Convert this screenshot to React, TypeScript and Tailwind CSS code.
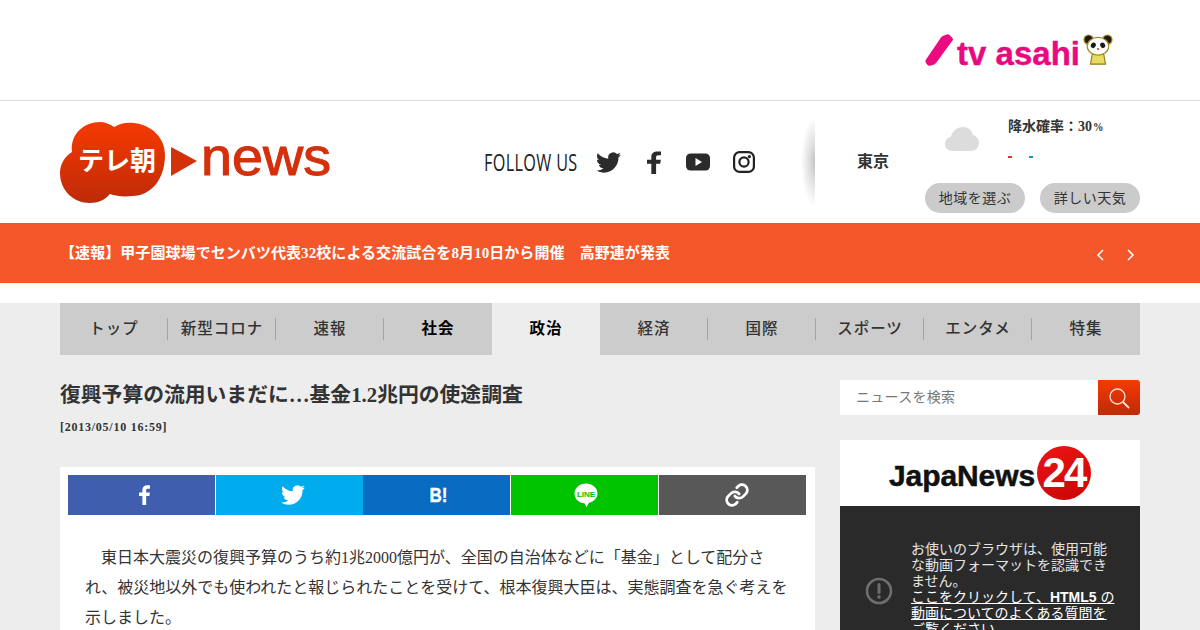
import React from "react";

const serif = { fontFamily: '"Liberation Serif", "Noto Sans CJK JP", serif' };

function TvAsahi() {
  return (
    <div className="flex items-start h-[40px]">
      <svg width="29" height="33" viewBox="0 0 29 33" className="mt-[3px] shrink-0">
        <path d="M1 25.500 L16 3.500 Q17 2 19 1.500 L22 0.500 Q23.500 0 24.500 1 L27.500 4 Q28.500 5 27.500 6.500 L11 29 Q10 30.200 8.500 30.700 L5 31.700 Q3.500 32 2.500 31 L0.700 28.500 Q0 27 1 25.500Z" fill="#ec0a80" />
      </svg>
      <span className="text-[33px] font-bold text-[#e6097f] leading-none ml-[3px] mt-[6px] whitespace-nowrap [-webkit-text-stroke:0.4px_#e6097f] [font-family:'Liberation_Sans',sans-serif]">tv asahi</span>
      <svg width="30" height="32" viewBox="0 0 32 34" className="ml-[3px] mt-[3px] shrink-0">
        <circle cx="6" cy="6" r="5" fill="#1b1b10" stroke="#b59a1e" strokeWidth="1.200" />
        <circle cx="26" cy="6" r="5" fill="#1b1b10" stroke="#b59a1e" strokeWidth="1.200" />
        <path d="M10 21 H22 L24 32 H8Z" fill="#e8dc60" stroke="#8d7a1a" strokeWidth="1.200" />
        <ellipse cx="16" cy="13" rx="11.500" ry="9.500" fill="#fff" stroke="#a18c1a" strokeWidth="1.200" />
        <ellipse cx="11" cy="12" rx="2.600" ry="3" fill="#1a1a1a" transform="rotate(25 11 12)" />
        <ellipse cx="21" cy="12" rx="2.600" ry="3" fill="#1a1a1a" transform="rotate(-25 21 12)" />
        <circle cx="16" cy="16" r="1.100" fill="#c33" />
      </svg>
    </div>
  );
}

function TeleasaLogo() {
  return (
    <svg width="272" height="84" viewBox="0 0 272 84" className="block shrink-0">
      <defs>
        <linearGradient id="cl" x1="0" y1="0" x2="0" y2="1">
          <stop offset="0" stopColor="#f63a02" />
          <stop offset="1" stopColor="#be2a08" />
        </linearGradient>
      </defs>
      <path d="M12 32 C10 14 24 2 40 2 C45 2 50 4 54 7 C60 3 68 2 74 3 C92 5 105 18 105 35 C105 58 92 76 72 76 C64 77 56 76 50 74 C45 80 38 83 30 83 C13 83 0 70 0 53 C0 44 5 36 12 32Z" fill="url(#cl)" />
      <text x="18" y="50" fontSize="26" fontWeight="700" fill="#fff" style={{ fontFamily: '"Noto Sans CJK JP", sans-serif' }} textLength="78" lengthAdjust="spacingAndGlyphs">テレ朝</text>
      <path d="M111 27 L137 41 L111 56Z" fill="#d2310a" />
      <text x="141" y="55" fontSize="51" fontWeight="400" fill="#d4300b" stroke="#d4300b" strokeWidth="1" style={{ fontFamily: '"Liberation Sans", sans-serif' }} textLength="130" lengthAdjust="spacingAndGlyphs">news</text>
    </svg>
  );
}

function Twitter({ size, color }: { size: number; color: string }) {
  return (
    <svg width={size} height={size} viewBox="0 0 24 24" fill={color}>
      <path d="M23.95 4.57a10 10 0 0 1-2.82.77 4.96 4.96 0 0 0 2.16-2.72 9.9 9.9 0 0 1-3.12 1.18 4.92 4.92 0 0 0-8.38 4.48C7.69 8.1 4.07 6.13 1.64 3.16a4.82 4.82 0 0 0-.67 2.48c0 1.71.87 3.21 2.19 4.1a4.9 4.9 0 0 1-2.23-.62v.06a4.92 4.92 0 0 0 3.95 4.83 5 5 0 0 1-2.21.09 4.94 4.94 0 0 0 4.6 3.42A9.87 9.87 0 0 1 0 19.54 14 14 0 0 0 7.56 21.75c9.05 0 14-7.5 14-14 0-.21 0-.42-.02-.63a9.94 9.94 0 0 0 2.41-2.55z" />
    </svg>
  );
}

function Fb({ w, h, color }: { w: number; h: number; color: string }) {
  return (
    <svg width={w} height={h} viewBox="0 0 12 24" fill={color} preserveAspectRatio="none">
      <path d="M7.800 24V13.200h3.500l.6-4.200H7.800V6.400c0-1.200.4-2 2-2H12V.6C11.600.5 10.400.4 9 .4 5.900.4 3.700 2.300 3.700 5.800V9H0v4.200h3.700V24z" />
    </svg>
  );
}

function Follow() {
  return (
    <div className="flex items-center w-[272px] ml-[152px] shrink-0">
      <span className="text-[23px] text-[#222] leading-none w-[112px] shrink-0 whitespace-nowrap scale-x-[0.705] origin-left tracking-[0.5px] [font-family:'Open_Sans',sans-serif]">FOLLOW US</span>
      <div className="w-[25px] h-[22px] flex items-center justify-center"><Twitter size={25} color="#2b2b2b" /></div>
      <div className="ml-[26px]"><Fb w={14} h={23} color="#2b2b2b" /></div>
      <svg width="24" height="18" viewBox="0 0 24 18" className="ml-[25px]">
        <rect width="24" height="17" y="0.500" rx="4.500" fill="#2b2b2b" />
        <path d="M9.500 5 L16 9 L9.500 13Z" fill="#fff" />
      </svg>
      <svg width="22" height="22" viewBox="0 0 22 22" className="ml-[23px]" fill="none" stroke="#222" strokeWidth="2.200">
        <rect x="1.100" y="1.100" width="19.800" height="19.800" rx="5.500" />
        <circle cx="11" cy="11" r="4.600" />
        <circle cx="16.400" cy="5.600" r="0.600" fill="#222" />
      </svg>
    </div>
  );
}

function Weather() {
  return (
    <div className="relative ml-[59px] w-[325px] h-[122px] bg-white shrink-0">
      <div className="absolute left-[-14px] top-[16px] w-[14px] h-[90px] bg-[radial-gradient(ellipse_100%_50%_at_right,#c2c2c2_0%,#dedede_40%,#ffffff_100%)]" />
      <div className="flex h-[82px]">
        <div className="w-[42px]" />
        <div className="w-[60px] text-[16px] font-bold text-[#333] pt-[49px] leading-[24px]" style={serif}>東京</div>
        <div className="w-[91px] pt-[26px] pl-[28px]">
          <svg width="34" height="24" viewBox="0 0 34 24"><path d="M8 24 C2 24 0 20 0 17 C0 13 3 10 6 10 C7 4 12 0 18 0 C23 0 27 3 28 8 C32 9 34 13 34 16 C34 21 30 24 26 24Z" fill="#dcdcdc" /></svg>
        </div>
        <div className="flex-1 pt-[15px]">
          <div className="text-[14px] font-bold text-[#333] leading-[21px] whitespace-nowrap" style={serif}>降水確率：30<span className="ml-[1px] text-[13px] scale-x-[0.8] inline-block origin-left">%</span></div>
          <div className="flex mt-[19px] h-[2px]">
            <span className="w-[4px] h-[1.500px] bg-[#d33]" />
            <span className="w-[4px] h-[1.500px] bg-[#1d8fc9] ml-[17px]" />
          </div>
        </div>
      </div>
      <div className="flex pl-[110px] gap-[15px]">
        <div className="w-[100px] h-[30px] rounded-full bg-[#cbcbcb] flex items-center justify-center text-[14px] text-[#333] tracking-[0.5px]" style={serif}>地域を選ぶ</div>
        <div className="w-[100px] h-[30px] rounded-full bg-[#cbcbcb] flex items-center justify-center text-[14px] text-[#333] tracking-[0.5px]" style={serif}>詳しい天気</div>
      </div>
    </div>
  );
}

const tabs = ["トップ", "新型コロナ", "速報", "社会", "政治", "経済", "国際", "スポーツ", "エンタメ", "特集"];

function Nav() {
  return (
    <div className="mx-[60px] flex h-[52px] bg-[#cccccc]">
      {tabs.map((t, i) => {
        const active = i === 4;
        const strong = i === 3 || i === 4;
        const noDivider = (i >= 3 && i <= 4) || i === 9;
        return (
          <div key={t} className={`relative w-[108px] flex items-center justify-center ${active ? "bg-[#ededed]" : ""}`}>
            <span className={`text-[15.5px] leading-none tracking-[1px] whitespace-nowrap ${strong ? "font-bold text-black" : "font-medium text-[#333]"}`} style={serif}>{t}</span>
            {!noDivider && <span className="absolute right-0 top-[15px] w-[1px] h-[22px] bg-[#a5a5a5]" />}
          </div>
        );
      })}
    </div>
  );
}

function Share() {
  return (
    <div className="flex h-[40px] gap-[1px]">
      <div className="w-[147px] shrink-0 bg-[#3f5fae] flex items-center justify-center pl-[5px]"><Fb w={11} h={20} color="#fff" /></div>
      <div className="w-[147px] shrink-0 bg-[#00acee] flex items-center justify-center pl-[7px]"><Twitter size={24} color="#fff" /></div>
      <div className="w-[147px] shrink-0 bg-[#0a6bc2] -ml-[1px] flex items-center justify-center pl-[4px]">
        <span className="text-white text-[20px] font-bold scale-x-[0.85] [-webkit-text-stroke:0.4px_#fff] [font-family:'Liberation_Sans',sans-serif]">B!</span>
      </div>
      <div className="w-[147px] shrink-0 bg-[#00c300] flex items-center justify-center pl-[2px]">
        <svg width="26" height="26" viewBox="0 0 26 26">
          <path d="M13 1.500 C6.500 1.500 1.500 6 1.500 11.500 C1.500 17 6 21 11.500 21.300 L13.500 25 L16 20.800 C21 19.500 24.500 16 24.500 11.500 C24.500 6 19.500 1.500 13 1.500Z" fill="#fff" />
          <text x="13" y="14.500" textAnchor="middle" fontSize="8" fontWeight="700" fill="#00c300" style={{ fontFamily: '"Liberation Sans", sans-serif' }}>LINE</text>
        </svg>
      </div>
      <div className="w-[147px] shrink-0 bg-[#585858] flex items-center justify-center pl-[9px]">
        <svg width="26" height="26" viewBox="0 0 24 24" fill="none" stroke="#fff" strokeWidth="2.600" strokeLinecap="round" strokeLinejoin="round">
          <path d="M10 13a5 5 0 0 0 7.500.5l3-3a5 5 0 0 0-7-7l-1.700 1.700" />
          <path d="M14 11a5 5 0 0 0-7.500-.5l-3 3a5 5 0 0 0 7 7l1.700-1.700" />
        </svg>
      </div>
    </div>
  );
}

function Article() {
  return (
    <div className="w-[755px] shrink-0">
      <h1 className="text-[20.8px] font-bold text-[#333] leading-[30px] mt-[25px]" style={serif}>復興予算の流用いまだに…基金1.2兆円の使途調査</h1>
      <div className="text-[12px] font-bold text-[#333] leading-[18px] mt-[8px] tracking-[0.75px]" style={serif}>[2013/05/10 16:59]</div>
      <div className="bg-white mt-[31px] pl-[8px] pr-[9px] pt-[8px] h-[300px]">
        <Share />
        <p className="text-[16px] text-[#333] leading-[30px] pl-[17px] pr-[16px] mt-[27px] pt-[1px]" style={serif}>
          <span className="pl-[16px]">東日本大震災の復興予算のうち約1兆2000億円が、全国の自治体などに「基金」として配分さ</span><br />れ、被災地以外でも使われたと報じられたことを受けて、根本復興大臣は、実態調査を急ぐ考えを示しました。
        </p>
      </div>
    </div>
  );
}

function Side() {
  return (
    <div className="w-[300px] ml-[25px] pt-[25px] shrink-0">
      <div className="flex h-[35px]">
        <div className="flex-1 bg-white pl-[16px] flex items-center text-[14px] text-[#777] tracking-[0.3px]" style={serif}>ニュースを検索</div>
        <div className="w-[42px] bg-[linear-gradient(#f63a02,#be2a08)] rounded-r-[3px] flex items-center justify-center">
          <svg width="22" height="22" viewBox="0 0 22 22" fill="none" stroke="#ffe3d2" strokeWidth="1.300"><circle cx="9.500" cy="9.500" r="7.500" /><path d="M15 15l6 6" strokeWidth="1.800" /></svg>
        </div>
      </div>
      <div className="mt-[25px] h-[66px] bg-white flex items-center justify-center">
        <span className="text-[30px] font-bold text-[#111] tracking-[-0.1px] leading-none mt-[5px] [-webkit-text-stroke:0.5px_#111] [font-family:'Liberation_Sans',sans-serif]">JapaNews</span>
        <div className="ml-[2px] w-[54px] h-[54px] rounded-full bg-[linear-gradient(160deg,#ee1414,#c80606)] flex items-center justify-center text-white text-[42px] font-bold tracking-[-2px] leading-none [font-family:'Liberation_Sans',sans-serif]">24</div>
      </div>
      <div className="bg-[#2a2a2a] h-[200px] flex">
        <div className="w-[71px] pl-[25px] pt-[71px]">
          <svg width="28" height="28" viewBox="0 0 28 28" fill="none"><circle cx="14" cy="14" r="12" stroke="#6e6e6e" strokeWidth="2.600" /><path d="M14 7.500v8" stroke="#6e6e6e" strokeWidth="3" strokeLinecap="round" /><circle cx="14" cy="20" r="1.800" fill="#6e6e6e" /></svg>
        </div>
        <div className="w-[206px] pt-[35px] text-[14px] leading-[16px] text-[#e4e4e4] [font-family:'Liberation_Sans','Noto_Sans_CJK_JP',sans-serif]">
          <div>お使いのブラウザは、使用可能な動画フォーマットを認識できません。</div>
          <div className="underline text-white">ここをクリックして、<b>HTML5</b> の動画についてのよくある質問をご覧ください。</div>
        </div>
      </div>
    </div>
  );
}

export default function App() {
  return (
    <div className="w-[1200px] h-[630px] overflow-hidden bg-[#ededed]">
      <div className="bg-white h-[100px] flex justify-end pr-[87px] pt-[31px]"><TvAsahi /></div>
      <div className="h-[123px] bg-white border-t border-[#dcdcdc] flex items-center pl-[60px]">
        <TeleasaLogo />
        <Follow />
        <Weather />
      </div>
      <div className="h-[60px] bg-[#f4572a] flex items-center px-[60px] justify-between">
        <span className="text-[15px] font-bold text-white leading-none tracking-[0.07px]" style={serif}>【速報】甲子園球場でセンバツ代表32校による交流試合を8月10日から開催　高野連が発表</span>
        <div className="flex gap-[21px] pr-[4px] mt-[3px]">
          <svg width="10" height="14" viewBox="0 0 10 14" fill="none" stroke="#fff" strokeWidth="1.500"><path d="M8 2 L3 7 L8 12" /></svg>
          <svg width="10" height="14" viewBox="0 0 10 14" fill="none" stroke="#fff" strokeWidth="1.500"><path d="M2 2 L7 7 L2 12" /></svg>
        </div>
      </div>
      <div className="h-[20px] bg-white" />
      <Nav />
      <div className="flex px-[60px]">
        <Article />
        <Side />
      </div>
    </div>
  );
}
